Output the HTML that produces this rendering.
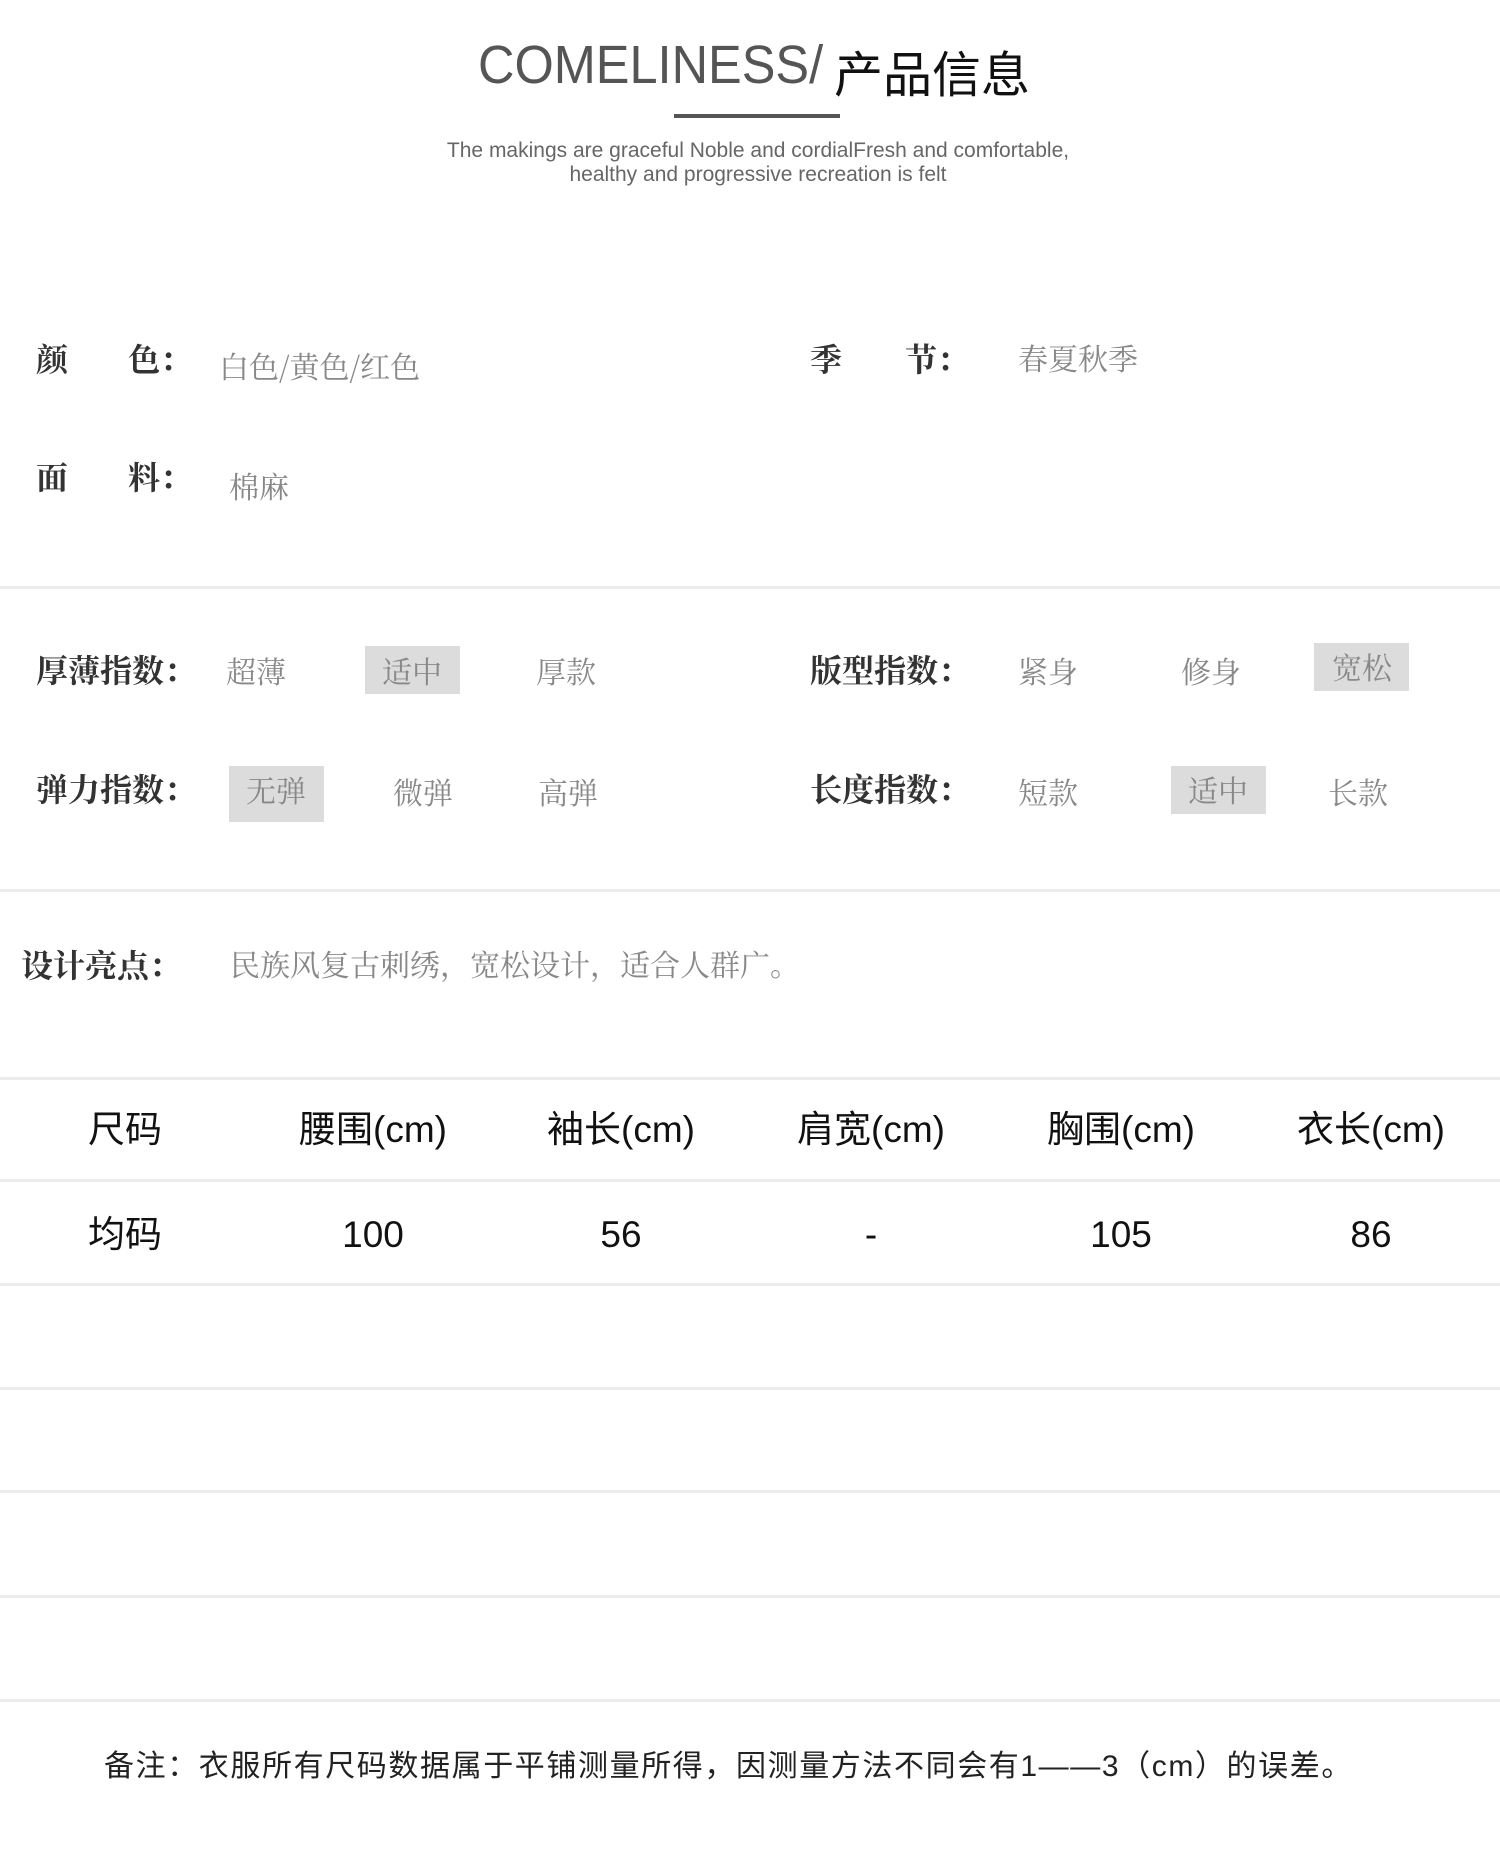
<!DOCTYPE html>
<html><head><meta charset="utf-8"><style>
body{margin:0;width:1500px;height:1868px;background:#fff;position:relative;overflow:hidden;font-family:"Liberation Sans","Noto Sans CJK SC",sans-serif}
.a{position:absolute;white-space:nowrap;line-height:1}
.lb{font-family:"Noto Serif CJK SC",serif;font-weight:700;color:#333;font-size:32px}
.v{font-family:"Noto Serif CJK SC",serif;color:#888;font-size:30px}
.box{position:absolute;background:#dcdcdc}
.hr{position:absolute;left:0;width:1500px;height:3px;background:#ececec}
.th{position:absolute;width:250px;text-align:center;font-size:37px;color:#111;line-height:1}
</style></head><body>
<div class="a" style="left:478px;top:38px;font-size:54px;color:#555;transform:scaleX(0.935);transform-origin:left top">COMELINESS/</div>
<div class="a" style="left:834px;top:52px;font-size:49px;color:#111">产品信息</div>
<div style="position:absolute;left:674px;top:114px;width:166px;height:4px;background:#555"></div>
<div class="a" style="left:0;width:1516px;text-align:center;top:139px;font-size:21px;color:#666;line-height:24px">The makings are graceful Noble and cordialFresh and comfortable,<br>healthy and progressive recreation is felt</div>

<div class="a lb" style="left:36px;top:342px">颜</div><div class="a lb" style="left:128px;top:342px">色：</div>
<div class="a v" style="left:219px;top:350px">白色/黄色/红色</div>
<div class="a lb" style="left:810px;top:342px">季</div><div class="a lb" style="left:905px;top:342px">节：</div>
<div class="a v" style="left:1018px;top:342px">春夏秋季</div>
<div class="a lb" style="left:36px;top:460px">面</div><div class="a lb" style="left:128px;top:460px">料：</div>
<div class="a v" style="left:229px;top:470px">棉麻</div>
<div class="hr" style="top:586px"></div>

<div class="box" style="left:365px;top:646px;width:95px;height:48px"></div>
<div class="box" style="left:1314px;top:643px;width:95px;height:48px"></div>
<div class="box" style="left:229px;top:766px;width:95px;height:56px"></div>
<div class="box" style="left:1171px;top:766px;width:95px;height:48px"></div>
<div class="a lb" style="left:36px;top:653px">厚薄指数：</div>
<div class="a v" style="left:226px;top:655px">超薄</div>
<div class="a v" style="left:382px;top:655px">适中</div>
<div class="a v" style="left:536px;top:655px">厚款</div>
<div class="a lb" style="left:810px;top:653px">版型指数：</div>
<div class="a v" style="left:1018px;top:655px">紧身</div>
<div class="a v" style="left:1181px;top:655px">修身</div>
<div class="a v" style="left:1332px;top:651px">宽松</div>
<div class="a lb" style="left:36px;top:772px">弹力指数：</div>
<div class="a v" style="left:246px;top:774px">无弹</div>
<div class="a v" style="left:393px;top:776px">微弹</div>
<div class="a v" style="left:538px;top:776px">高弹</div>
<div class="a lb" style="left:810px;top:772px">长度指数：</div>
<div class="a v" style="left:1018px;top:776px">短款</div>
<div class="a v" style="left:1188px;top:774px">适中</div>
<div class="a v" style="left:1328px;top:776px">长款</div>
<div class="hr" style="top:889px"></div>

<div class="a lb" style="left:21px;top:948px">设计亮点：</div>
<div class="a v" style="left:230px;top:948px">民族风复古刺绣，宽松设计，适合人群广。</div>

<div class="hr" style="top:1077px"></div>
<div class="th" style="left:0;top:1111px">尺码</div>
<div class="th" style="left:248px;top:1111px">腰围(cm)</div>
<div class="th" style="left:496px;top:1111px">袖长(cm)</div>
<div class="th" style="left:746px;top:1111px">肩宽(cm)</div>
<div class="th" style="left:996px;top:1111px">胸围(cm)</div>
<div class="th" style="left:1246px;top:1111px">衣长(cm)</div>
<div class="hr" style="top:1179px"></div>
<div class="th" style="left:0;top:1216px">均码</div>
<div class="th" style="left:248px;top:1216px">100</div>
<div class="th" style="left:496px;top:1216px">56</div>
<div class="th" style="left:746px;top:1216px">-</div>
<div class="th" style="left:996px;top:1216px">105</div>
<div class="th" style="left:1246px;top:1216px">86</div>
<div class="hr" style="top:1283px"></div>
<div class="hr" style="top:1387px"></div>
<div class="hr" style="top:1490px"></div>
<div class="hr" style="top:1595px"></div>
<div class="hr" style="top:1699px"></div>
<div class="a" style="left:104px;top:1752px;font-size:30px;letter-spacing:1.6px;color:#222">备注：衣服所有尺码数据属于平铺测量所得，因测量方法不同会有1——3（cm）的误差。</div>
</body></html>
